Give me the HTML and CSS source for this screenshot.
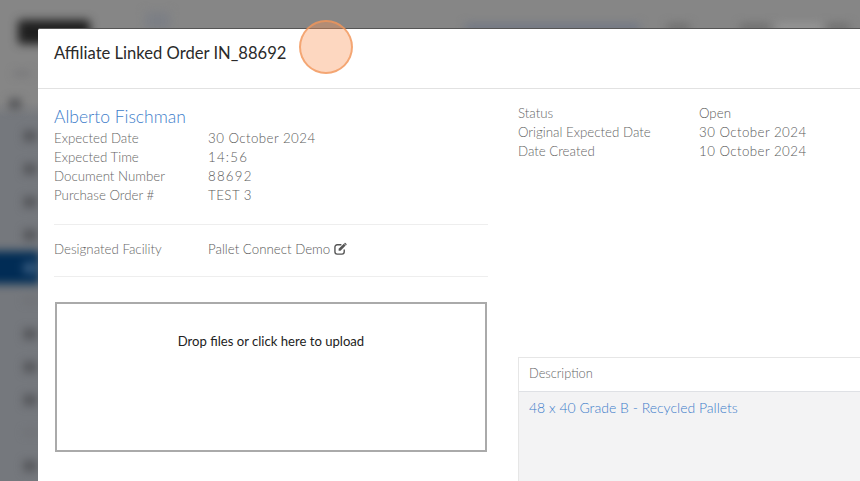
FILE: index.html
```html
<!DOCTYPE html>
<html lang="en">
<head>
    <meta charset="UTF-8">
    <meta name="viewport" content="width=device-width, initial-scale=1.0">
    <title>Affiliate Linked Order IN_88692</title>
    <link rel="stylesheet" href="styles.css">
</head>
<body>
    <div class="backdrop">
        <div class="backdrop-inner">
            <div class="topbar">
                <span class="logo-blob"></span>
                <span class="search-blob"></span>
                <span class="top-link"></span>
                <span class="top-dark"></span>
                <span class="top-dark top-dark-b"></span>
                <span class="top-light"></span>
                <span class="top-dark top-dark-c"></span>
            </div>
            <div class="sidebar">
                <div class="side-head"><span class="side-line"></span></div>
                <div class="side-item side-first"><span class="side-dot"></span></div>
                <div class="side-item"><span class="side-dot"></span></div>
                <div class="side-item"><span class="side-dot"></span></div>
                <div class="side-item"><span class="side-dot"></span></div>
                <div class="side-item"><span class="side-dot"></span></div>
                <div class="side-item active"><span class="side-dot"></span></div>
                <div class="side-item"><span class="side-line"></span></div>
                <div class="side-item"><span class="side-dot"></span></div>
                <div class="side-item"><span class="side-dot"></span></div>
                <div class="side-item"><span class="side-dot"></span></div>
                <div class="side-item"><span class="side-line"></span></div>
                <div class="side-item"><span class="side-dot"></span></div>
            </div>
        </div>
    </div>

    <div class="modal">
        <div class="modal-header">
            <h4>Affiliate Linked Order IN_88692</h4>
        </div>
        <div class="modal-body">
            <div class="col-left">
                <a class="customer" href="#">Alberto Fischman</a>
                <div class="info-row"><span class="label">Expected Date</span><span class="value num">30 October 2024</span></div>
                <div class="info-row"><span class="label">Expected Time</span><span class="value digits">14:56</span></div>
                <div class="info-row"><span class="label">Document Number</span><span class="value digits">88692</span></div>
                <div class="info-row"><span class="label">Purchase Order #</span><span class="value num">TEST 3</span></div>
                <div class="facility">
                    <div class="info-row">
                        <span class="label">Designated Facility</span>
                        <span class="value">Pallet Connect Demo
                            <svg class="edit-icon" viewBox="0 0 14 14" width="13" height="13">
                                <path d="M11 8v2.6A2.4 2.4 0 0 1 8.6 13H3.4A2.4 2.4 0 0 1 1 10.6V5.4A2.4 2.4 0 0 1 3.4 3H8" fill="none" stroke="#555" stroke-width="1.5"/>
                                <path d="M5 7.4 10.6 1.8 12.6 3.8 7 9.4H5z" fill="#555"/>
                                <path d="M11.3 1.1a.8.8 0 0 1 1.1 0l1 1a.8.8 0 0 1 0 1.1l-.4.4-2-2z" fill="#555"/>
                            </svg>
                        </span>
                    </div>
                </div>
                <div class="dropzone">Drop files or click here to upload</div>
            </div>
            <div class="col-right">
                <div class="status-block">
                    <div class="info-row wide"><span class="label">Status</span><span class="value">Open</span></div>
                    <div class="info-row wide"><span class="label">Original Expected Date</span><span class="value num">30 October 2024</span></div>
                    <div class="info-row wide"><span class="label">Date Created</span><span class="value num">10 October 2024</span></div>
                </div>
                <div class="lines">
                    <div class="lines-head">Description</div>
                    <div class="lines-body"><a href="#">48 x 40 Grade B - Recycled Pallets</a></div>
                </div>
            </div>
        </div>
    </div>

    <div class="click-marker"></div>
</body>
</html>
```

FILE: styles.css
```css
html, body {
    height: 100%;
}
body {
    margin: 0;
    overflow: hidden;
    background-color: #868686;
    font-family: "Lato", "Liberation Sans", sans-serif;
    font-weight: 300;
    font-size: 13.3px;
    color: #666;
}

/* blurred page behind the dialog */
.backdrop {
    position: absolute;
    top: 0;
    left: 0;
    width: 860px;
    height: 481px;
    overflow: hidden;
    background: linear-gradient(#868686 102px, #75787d 117px);
}
.backdrop-inner {
    width: 100%;
    height: 100%;
    filter: blur(5px);
}
.topbar {
    display: flex;
    align-items: flex-start;
    height: 62px;
    padding: 20px 0 0 18px;
    box-sizing: border-box;
}
.logo-blob {
    width: 72px;
    height: 24px;
    background-color: #1f1f1f;
    border-radius: 3px;
}
.search-blob {
    width: 25px;
    height: 18px;
    margin: -8px 0 0 55px;
    background-color: #7c7f85;
}
.top-link {
    width: 175px;
    height: 8px;
    margin: 4px 0 0 295px;
    background-color: #6f7685;
}
.top-dark {
    width: 23px;
    height: 8px;
    margin: 4px 0 0 27px;
    background-color: #6c6c6c;
}
.top-dark-b {
    width: 30px;
    margin-left: 50px;
}
.top-dark-c {
    margin-left: 5px;
}
.top-light {
    width: 45px;
    height: 8px;
    margin: 4px 0 0 7px;
    background-color: #9a9a9a;
}
.sidebar {
    width: 40px;
    height: 419px;
}
.side-head {
    height: 26px;
    padding: 10px 0 0 14px;
    box-sizing: border-box;
}
.side-head .side-line {
    display: block;
    width: 16px;
}
.side-item {
    height: 33px;
    display: flex;
    align-items: center;
    padding-left: 24px;
}
.side-first {
    height: 31px;
    padding-left: 9px;
}
.side-dot {
    width: 12px;
    height: 10px;
    background-color: #4f5054;
}
.side-line {
    width: 12px;
    height: 3px;
    background-color: #6a6a6e;
}
.side-item.active {
    background-color: #012c55;
    box-shadow: -14px 0 0 #012c55;
}
.active .side-dot {
    background-color: #3f6285;
}

/* dialog */
.modal {
    position: absolute;
    top: 28px;
    left: 38px;
    width: 822px;
    height: 453px;
    display: flex;
    flex-direction: column;
    overflow: hidden;
    background-color: #fff;
    border-top: 1px solid #555;
    box-sizing: border-box;
    border-radius: 2px 0 0 0;
}
.modal-header {
    height: 60px;
    flex-shrink: 0;
    padding: 14px 16px 0;
    box-sizing: border-box;
    border-bottom: 1px solid #e2e2e2;
}
.modal-header h4 {
    margin: 0;
    font-size: 16.6px;
    line-height: 20px;
    font-weight: 400;
    color: #2a2a2a;
}
.modal-body {
    flex: 1;
    display: flex;
    gap: 30px;
    padding: 15px 0 0 16px;
}
.col-left {
    width: 434px;
    flex-shrink: 0;
    padding-top: 1px;
}
.col-right {
    flex: 1;
    display: flex;
    flex-direction: column;
}
.customer {
    display: block;
    font-size: 17.5px;
    line-height: 24px;
    color: #3d7dca;
    text-decoration: none;
}
.info-row {
    display: flex;
    line-height: 19px;
}
.label {
    width: 154px;
    flex-shrink: 0;
    color: #666;
}
.value {
    color: #5a5a5a;
}
.num {
    letter-spacing: 0.45px;
}
.digits {
    letter-spacing: 1.2px;
}
.wide .label {
    width: 181px;
}
.facility {
    margin-top: 19px;
    padding: 15px 0 17px;
    border-top: 1px solid #eee;
    border-bottom: 1px solid #eee;
}
.edit-icon {
    vertical-align: -1px;
}
.dropzone {
    height: 150px;
    margin: 25px 1px 0;
    padding-top: 27px;
    box-sizing: border-box;
    border: 2px solid #aaa;
    text-align: center;
    line-height: 20px;
    color: #222;
    font-weight: 400;
    font-size: 13.1px;
}
.status-block {
    height: 253px;
    flex-shrink: 0;
}
.lines {
    flex: 1;
    border: 1px solid #e6e6e6;
    border-right: none;
    border-bottom: none;
    background-color: #f3f3f4;
}
.lines-head {
    height: 34px;
    padding: 6px 10px 0;
    box-sizing: border-box;
    background-color: #fff;
    border-bottom: 1px solid #dfe1e5;
    line-height: 18px;
    font-size: 12.8px;
}
.lines-body {
    padding: 7px 10px;
    line-height: 18px;
    font-size: 14px;
}
.lines-body a {
    color: #3d7dca;
    text-decoration: none;
}

/* tutorial click marker */
.click-marker {
    position: absolute;
    top: 20px;
    left: 299px;
    width: 54px;
    height: 54px;
    box-sizing: border-box;
    border: 2px solid rgba(240, 150, 90, 0.75);
    border-radius: 50%;
    background-color: rgba(250, 150, 90, 0.38);
}
```
